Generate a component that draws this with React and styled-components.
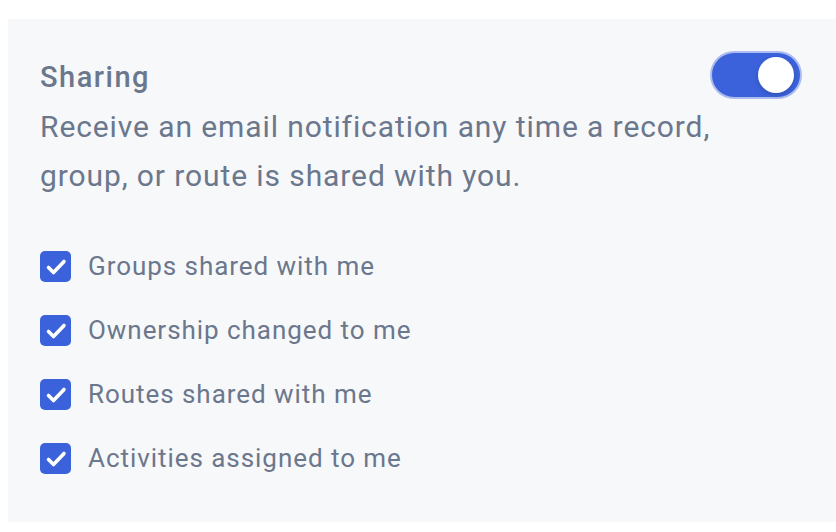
import React, { useState } from "react";
import styled, { createGlobalStyle } from "styled-components";

const GlobalStyle = createGlobalStyle`
  html, body {
    margin: 0;
    background: #ffffff;
  }
  body {
    padding: 19px 0 10px 8px;
    font-family: Roboto, "Noto Sans", "Liberation Sans", sans-serif;
  }
`;

// Settings card for one notification group
const Panel = styled.section`
  background-color: #f7f8fa;
  height: 503px;
  box-sizing: border-box;
  padding: 34px 36px 0 32px;
  color: #6b778c;
`;

const Header = styled.div`
  display: flex;
  justify-content: space-between;
  align-items: flex-start;
`;

const Title = styled.h2`
  margin: 0;
  padding-top: 4px;
  font-size: 29px;
  font-weight: 500;
  letter-spacing: 1.5px;
  line-height: 40px;
  color: #6b778c;
`;

const Description = styled.p`
  margin: 5px 0 0;
  max-width: 710px;
  font-size: 30px;
  letter-spacing: 0.9px;
  line-height: 49px;
  font-weight: 400;
`;

const Track = styled.button`
  position: relative;
  width: 88px;
  height: 44px;
  border: none;
  border-radius: 22px;
  padding: 0;
  cursor: pointer;
  background-color: ${(props) => (props.on ? "#3b62db" : "#c9cfd9")};
  box-shadow: 0 0 0 2px rgba(59, 98, 219, 0.4);
`;

const Knob = styled.span`
  position: absolute;
  top: 4px;
  left: ${(props) => (props.on ? "46px" : "4px")};
  width: 36px;
  height: 36px;
  border-radius: 50%;
  background: #ffffff;
  box-shadow: 0 2px 4px rgba(20, 30, 60, 0.25);
`;

const List = styled.ul`
  list-style: none;
  margin: 51px 0 0;
  padding: 0;
  display: flex;
  flex-direction: column;
  gap: 33px;
`;

const Item = styled.li`
  display: flex;
  align-items: center;
  gap: 17px;
  font-size: 26px;
  letter-spacing: 0.95px;
  line-height: 31px;
  cursor: pointer;
`;

const Box = styled.span`
  width: 31px;
  height: 31px;
  border-radius: 5px;
  background-color: ${(props) => (props.checked ? "#3b62db" : "#ffffff")};
  border: ${(props) => (props.checked ? "none" : "2px solid #c9cfd9")};
  box-sizing: border-box;
  display: flex;
  align-items: center;
  justify-content: center;
  flex-shrink: 0;
`;

const options = [
  "Groups shared with me",
  "Ownership changed to me",
  "Routes shared with me",
  "Activities assigned to me",
];

function Check() {
  return (
    <svg width="22" height="18" viewBox="0 0 22 18" fill="none">
      <path
        d="M3.5 9.5l5 5L19 3.5"
        stroke="#ffffff"
        strokeWidth="3.6"
        strokeLinecap="round"
        strokeLinejoin="round"
      />
    </svg>
  );
}

export default function App() {
  const [enabled, setEnabled] = useState(true);
  const [checked, setChecked] = useState(options.map(() => true));

  const toggleItem = (index) => {
    setChecked(checked.map((value, i) => (i === index ? !value : value)));
  };

  return (
    <>
      <GlobalStyle />
      <Panel>
        <Header>
          <Title>Sharing</Title>
          <Track on={enabled ? 1 : 0} onClick={() => setEnabled(!enabled)}>
            <Knob on={enabled ? 1 : 0} />
          </Track>
        </Header>
        <Description>
          Receive an email notification any time a record, group, or route is
          shared with you.
        </Description>
        <List>
          {options.map((label, i) => (
            <Item key={label} onClick={() => toggleItem(i)}>
              <Box checked={checked[i]}>{checked[i] && <Check />}</Box>
              {label}
            </Item>
          ))}
        </List>
      </Panel>
    </>
  );
}
